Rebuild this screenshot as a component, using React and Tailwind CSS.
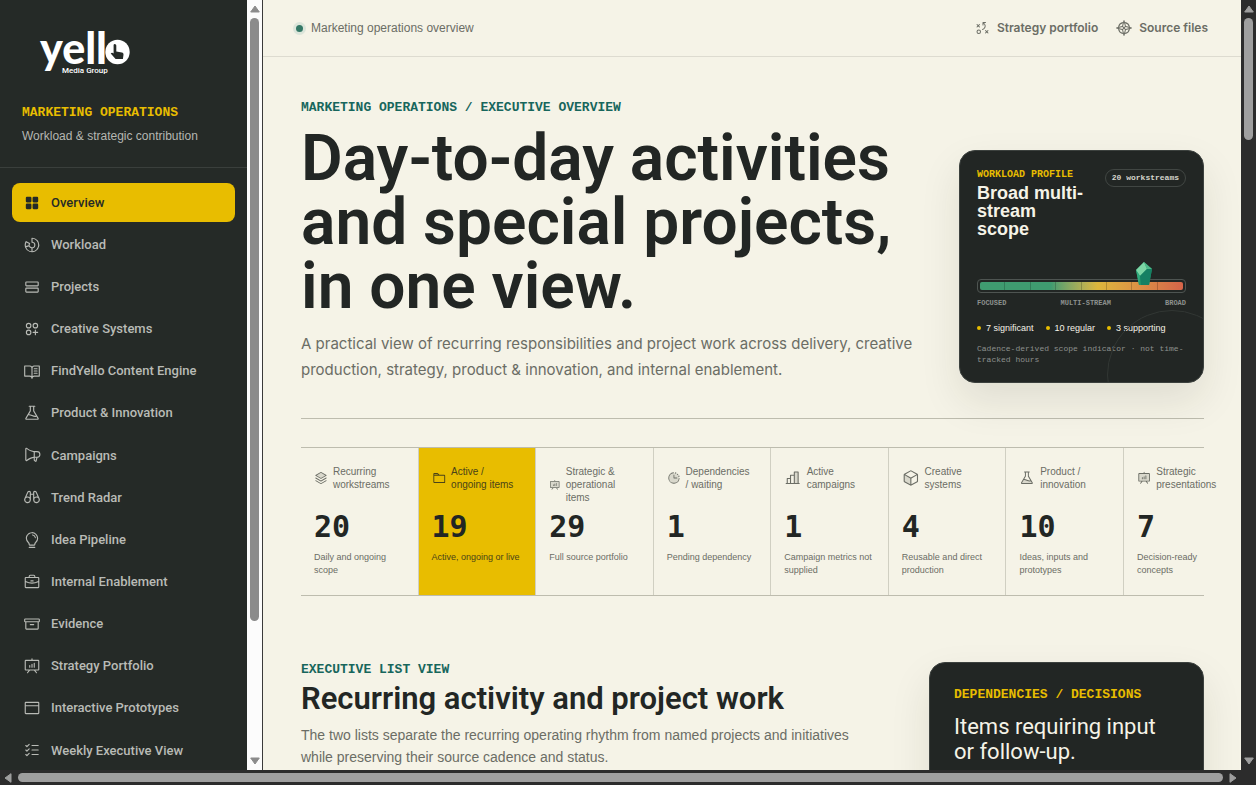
import {
  PiArchive,
  PiBinoculars,
  PiBookOpenText,
  PiBriefcase,
  PiBrowser,
  PiChartBarDuotone,
  PiChartDonut,
  PiCirclesThreePlus,
  PiClockCountdownDuotone,
  PiCompassRose,
  PiCubeDuotone,
  PiFlask,
  PiFlaskDuotone,
  PiFolderDuotone,
  PiLightbulb,
  PiListChecks,
  PiMegaphone,
  PiPresentationChart,
  PiPresentationChartDuotone,
  PiRows,
  PiSquaresFourFill,
  PiStackDuotone,
  PiStrategy,
} from 'react-icons/pi';

const NAV = [
  { label: 'Overview', icon: PiSquaresFourFill, active: true },
  { label: 'Workload', icon: PiChartDonut },
  { label: 'Projects', icon: PiRows },
  { label: 'Creative Systems', icon: PiCirclesThreePlus },
  { label: 'FindYello Content Engine', icon: PiBookOpenText },
  { label: 'Product & Innovation', icon: PiFlask },
  { label: 'Campaigns', icon: PiMegaphone },
  { label: 'Trend Radar', icon: PiBinoculars },
  { label: 'Idea Pipeline', icon: PiLightbulb },
  { label: 'Internal Enablement', icon: PiBriefcase },
  { label: 'Evidence', icon: PiArchive },
  { label: 'Strategy Portfolio', icon: PiPresentationChart },
  { label: 'Interactive Prototypes', icon: PiBrowser },
  { label: 'Weekly Executive View', icon: PiListChecks },
];

const METRICS = [
  { label: 'Recurring workstreams', value: 20, note: 'Daily and ongoing scope', icon: PiStackDuotone },
  { label: 'Active / ongoing items', value: 19, note: 'Active, ongoing or live', icon: PiFolderDuotone, highlight: true },
  { label: 'Strategic & operational items', value: 29, note: 'Full source portfolio', icon: PiPresentationChartDuotone },
  { label: 'Dependencies /\u00a0waiting', value: 1, note: 'Pending dependency', icon: PiClockCountdownDuotone },
  { label: 'Active campaigns', value: 1, note: 'Campaign metrics not supplied', icon: PiChartBarDuotone },
  { label: 'Creative systems', value: 4, note: 'Reusable and direct production', icon: PiCubeDuotone },
  { label: 'Product / innovation', value: 10, note: 'Ideas, inputs and prototypes', icon: PiFlaskDuotone },
  { label: 'Strategic presentations', value: 7, note: 'Decision-ready concepts', icon: PiPresentationChartDuotone },
];

const MIX = ['7 significant', '10 regular', '3 supporting'];

function Arrow({ className }) {
  return (
    <svg viewBox="0 0 10 8" className={`h-2 w-[10px] shrink-0 ${className}`} aria-hidden="true">
      <path d="M5 1 9.300 7H.7Z" fill="currentColor" stroke="currentColor" strokeLinejoin="round" />
    </svg>
  );
}

function Logo() {
  return (
    <svg viewBox="0 0 94 50" className="ml-[17px] h-[50px] w-[94px] overflow-visible" role="img" aria-label="yello Media Group">
      <text x="1" y="37" fill="#fff" fontFamily="Lato, sans-serif" fontWeight="900" fontSize="43">
        yell
      </text>
      <circle cx="78.500" cy="25" r="12.200" fill="#fff" />
      <path
        d="M75.500 17c1.200 0 1.800.7 1.800 1.800v5.600l5.600 1.200c1.200.3 1.700 1 1.600 2.200l-.6 4.200h-7.300l-4.900-5.400c.8-1.200 1.900-1 2.900-.2v-7.600c0-1.100.2-1.800.9-1.800Z"
        fill="#252a27"
      />
      <text x="23" y="46" fill="#fff" fontFamily="Roboto, sans-serif" fontWeight="500" fontSize="8">
        Media Group
      </text>
    </svg>
  );
}

function Sidebar() {
  return (
    <aside className="flex w-[247px] shrink-0 flex-col overflow-hidden bg-[#252a27]">
      <div className="border-b border-[#3a3f3c] px-[22px] pt-[27px] pb-[21px]">
        <Logo />
        <p className="mt-7 font-['Liberation_Mono',monospace] text-[13px] leading-4 font-bold text-[#e8bd00]">
          MARKETING OPERATIONS
        </p>
        <p className="mt-[5px] text-[12px] leading-5 text-[#b5b7b2]">Workload &amp; strategic contribution</p>
      </div>
      <nav className="flex flex-1 flex-col justify-between gap-[3px] px-3 pt-[15px]">
        {NAV.map(({ label, icon: Icon, active }) => (
          <a
            key={label}
            href="#"
            aria-current={active ? 'page' : undefined}
            className={`flex h-[39px] shrink-0 items-center gap-[10px] rounded-lg px-[11px] font-['Roboto',sans-serif] text-[13px] font-medium ${
              active ? 'bg-[#e8bd00] text-[#252a27]' : 'text-[#b9bbb6]'
            }`}
          >
            <Icon className="size-[18px] shrink-0" />
            {label}
          </a>
        ))}
      </nav>
    </aside>
  );
}

function Gauge() {
  return (
    <div className="relative mt-[41px]">
      <div className="rounded-sm border border-[#4e5451] p-[2px]">
        <div className="grid h-2 grid-cols-8 divide-x divide-black/20 rounded-xs bg-linear-to-r from-[#3f9b70] from-35% via-[#dcb63c] via-58% to-[#d66449]">
          {Array.from({ length: 8 }, (_, i) => (
            <span key={i} />
          ))}
        </div>
      </div>
      <svg viewBox="0 0 16 24" className="absolute bottom-[7px] left-[76%] h-6 w-4" aria-hidden="true">
        <path d="M8 0 16 7 13 23H3L0 8Z" fill="#23966d" />
        <path d="M8 0 0 8l4 6 7-7Z" fill="#7cd6a5" />
        <path d="M8 0 11 7 16 7Z" fill="#4fb98a" />
        <path d="M4 14 11 7l5 0-3 16H5Z" fill="#168063" />
        <path d="M0 8l4 6-1 9Z" fill="#2fa87b" />
      </svg>
    </div>
  );
}

function ProfileCard() {
  return (
    <section className="relative w-[245px] shrink-0 overflow-hidden rounded-2xl border border-[#3c413e] bg-[#222624] px-[17px] pt-4 pb-[17px] text-[#f5f3e7] shadow-[0_18px_40px_rgba(40,35,20,0.1)]">
      <div className="absolute -right-[34px] -bottom-[58px] size-[130px] rounded-full border border-[#323734]" />
      <div className="flex items-start justify-between">
        <div className="w-[110px]">
          <p className="font-['Liberation_Mono',monospace] text-[10px] leading-4 font-bold whitespace-nowrap text-[#e8bd00]">
            WORKLOAD PROFILE
          </p>
          <h2 className="mt-px text-[18px] leading-[18px] font-bold">Broad multi-stream scope</h2>
        </div>
        <span className="mt-[2px] rounded-full border border-[#414643] px-[6px] font-['Liberation_Mono',monospace] text-[8px] leading-4 font-bold whitespace-nowrap text-[#d5d5cc]">
          20 workstreams
        </span>
      </div>
      <Gauge />
      <div className="mt-[5px] flex justify-between font-['Liberation_Mono',monospace] text-[7px] leading-[10px] font-bold text-[#8d918e]">
        <span>FOCUSED</span>
        <span>MULTI-STREAM</span>
        <span>BROAD</span>
      </div>
      <ul className="mt-3 flex gap-3 text-[9px] leading-4">
        {MIX.map((item) => (
          <li key={item} className="flex items-center gap-[5px] whitespace-nowrap">
            <span className="size-1 rounded-full bg-[#e8bd00]" />
            {item}
          </li>
        ))}
      </ul>
      <p className="mt-[7px] font-['Liberation_Mono',monospace] text-[8px] leading-[11px] text-[#8d918e]">
        Cadence-derived scope indicator · not time-tracked hours
      </p>
    </section>
  );
}

function Metrics() {
  return (
    <section className="mt-7 grid grid-cols-[repeat(7,minmax(0,1fr))_80px] border-y border-[#bdbcae]">
      {METRICS.map(({ label, value, note, icon: Icon, highlight }, i) => (
        <div
          key={label}
          className={`px-[13px] pt-[17px] pb-[18px] ${i < METRICS.length - 1 ? 'border-r border-[#d0cfc2]' : 'w-[118px]'} ${
            highlight ? 'bg-[#e8bd00] text-[#4a4318]' : 'text-[#6b6d65]'
          }`}
        >
          <div className="h-[39px]">
            <div className="flex items-center gap-[5px] text-[10px] leading-[13px]">
              <Icon className="h-5 w-5" />
              <span>{label}</span>
            </div>
          </div>
          <p className="mt-[7px] font-['DejaVu_Sans_Mono',monospace] text-[30px] leading-8 font-bold text-[#222624]">{value}</p>
          <p className="mt-2 min-h-[26px] text-[9px] leading-[13px]">{note}</p>
        </div>
      ))}
    </section>
  );
}

export default function App() {
  return (
    <div className="flex h-screen flex-col overflow-hidden bg-[#2c2c2c] font-['Liberation_Sans',sans-serif] text-[#222624]">
      <div className="flex min-h-0 flex-1">
        <Sidebar />
        <div className="flex w-[15px] shrink-0 flex-col items-center justify-between bg-[#fcfcfc] py-[5px] text-[#8b8b8b]">
          <Arrow />
          <div className="mt-[5px] w-[9px] grow-[604] rounded-full bg-[#8b8b8b]" />
          <div className="grow-[136]" />
          <Arrow className="rotate-180" />
        </div>
        <main className="min-w-0 flex-1 overflow-hidden border-l border-[#3a3a3a] bg-[#f5f3e7]">
          <header className="flex h-[57px] items-center justify-between border-b border-[#dddbd0] px-[33px] text-[12px] text-[#6b6d65]">
            <div className="flex items-center gap-2">
              <span className="size-[7px] rounded-full bg-[#347866] ring-3 ring-[#dce5da]" />
              Marketing operations overview
            </div>
            <div className="flex items-center gap-[18px] font-['Inter',sans-serif] font-semibold">
              <a href="#" className="flex items-center gap-[7px]">
                <PiStrategy className="size-4" />
                Strategy portfolio
              </a>
              <a href="#" className="flex items-center gap-[7px]">
                <PiCompassRose className="size-4" />
                Source files
              </a>
            </div>
          </header>

          <div className="pt-[43px] pr-[37px] pl-[38px]">
            <div className="flex items-end justify-between border-b border-[#bdbcae] pb-[35px]">
              <div>
                <p className="font-['Liberation_Mono',monospace] text-[13px] leading-4 font-bold text-[#17665c]">
                  MARKETING OPERATIONS / EXECUTIVE OVERVIEW
                </p>
                <h1 className="mt-[11px] w-[620px] font-['Roboto',sans-serif] text-[64px] leading-[64px] font-semibold">
                  Day-to-day activities and special projects, in one view.
                </h1>
                <p className="mt-3 w-[620px] font-['Inter',sans-serif] text-[15px] leading-[26px] text-[#6b6d65]">
                  A practical view of recurring responsibilities and project work across delivery, creative production,
                  strategy, product &amp; innovation, and internal enablement.
                </p>
              </div>
              <ProfileCard />
            </div>

            <Metrics />

            <div className="mt-[66px] flex items-start justify-between">
              <section>
                <p className="font-['Liberation_Mono',monospace] text-[13px] leading-4 font-bold text-[#17665c]">EXECUTIVE LIST VIEW</p>
                <h2 className="mt-[3px] font-['Roboto',sans-serif] text-[31px] leading-9 font-semibold">
                  Recurring activity and project work
                </h2>
                <p className="mt-[7px] w-[570px] text-[14px] leading-[22px] text-[#6b6d65]">
                  The two lists separate the recurring operating rhythm from named projects and initiatives while
                  preserving their source cadence and status.
                </p>
              </section>
              <section className="h-[240px] w-[275px] shrink-0 rounded-2xl border border-[#3c413e] bg-[#222624] px-6 pt-6 shadow-[0_18px_40px_rgba(40,35,20,0.1)]">
                <p className="font-['Liberation_Mono',monospace] text-[13px] leading-4 font-bold text-[#e8bd00]">
                  DEPENDENCIES / DECISIONS
                </p>
                <h2 className="mt-[11px] font-['Roboto',sans-serif] text-[22px] leading-[25px] text-[#f5f3e7]">
                  Items requiring input or follow-up.
                </h2>
              </section>
            </div>
          </div>
        </main>
        <div className="flex w-[15px] shrink-0 flex-col items-center py-[5px] text-[#9f9f9f]">
          <Arrow />
          <div className="mt-[5px] w-[9px] grow-[122] rounded-full bg-[#9f9f9f]" />
          <div className="grow-[618]" />
          <Arrow className="rotate-180" />
        </div>
      </div>
      <div className="flex h-[15px] shrink-0 items-center pr-[18px] pl-[3px] text-[#9f9f9f]">
        <Arrow className="-rotate-90" />
        <div className="mx-[5px] h-[9px] flex-1 rounded-full bg-[#9f9f9f]" />
        <Arrow className="rotate-90" />
      </div>
    </div>
  );
}
